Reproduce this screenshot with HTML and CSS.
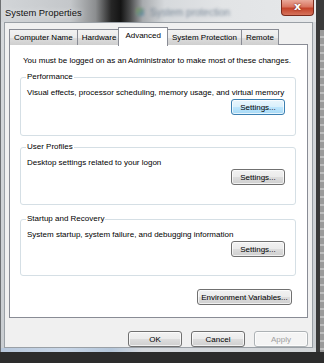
FILE: index.html
```html
<!DOCTYPE html>
<html>
<head>
<meta charset="utf-8">
<link rel="stylesheet" href="styles.css">
</head>
<body>
<div class="screen">
  <div class="main">
    <div class="window">
      <div class="titlebar">
        <span class="title">System Properties</span>
        <span class="ghost"><span class="ghost-icon"></span><span class="ghost-text">System protection</span></span>
        <span class="close">x</span>
      </div>
      <div class="client">
        <div class="tabs">
          <span class="tab">Computer Name</span>
          <span class="tab">Hardware</span>
          <span class="tab active">Advanced</span>
          <span class="tab">System Protection</span>
          <span class="tab">Remote</span>
        </div>
        <div class="panel">
          <p class="intro">You must be logged on as an Administrator to make most of these changes.</p>
          <fieldset class="group perf">
            <legend>Performance</legend>
            <p class="desc">Visual effects, processor scheduling, memory usage, and virtual memory</p>
            <div class="row"><button class="btn focus">Settings...</button></div>
          </fieldset>
          <fieldset class="group users">
            <legend>User Profiles</legend>
            <p class="desc">Desktop settings related to your logon</p>
            <div class="row"><button class="btn">Settings...</button></div>
          </fieldset>
          <fieldset class="group startup">
            <legend>Startup and Recovery</legend>
            <p class="desc">System startup, system failure, and debugging information</p>
            <div class="row"><button class="btn">Settings...</button></div>
          </fieldset>
          <div class="env-row"><button class="btn env">Environment Variables...</button></div>
        </div>
        <div class="actions">
          <button class="btn act">OK</button>
          <button class="btn act">Cancel</button>
          <button class="btn act disabled">Apply</button>
        </div>
      </div>
      <div class="bottom-frame"></div>
    </div>
    <div class="side"><div class="stripe"></div></div>
  </div>
</div>
</body>
</html>
```

FILE: styles.css
```css
* { box-sizing: border-box; }
html, body { margin: 0; padding: 0; }
body {
  font-family: "Liberation Sans", Arial, sans-serif;
  font-size: 8px;
  color: #000;
  background: #2a2a2a;
}
.screen {
  width: 324px;
  height: 363px;
  overflow: hidden;
  background: #2c2c2c;
}
.main {
  display: flex;
  height: 352px;
}
.window {
  width: 316px;
  display: flex;
  flex-direction: column;
  background: linear-gradient(to bottom, #d7dadd, #c9cdd1);
  border-left: 1px solid #6d7073;
}
.titlebar {
  height: 22px;
  display: flex;
  align-items: center;
  padding-left: 4px;
  background: linear-gradient(to right, #d2d5d8 0%, #c4c7ca 22%, #8c8e90 30%, #262626 35%, #141414 38%, #4a4b4c 41%, #a8abae 45%, #d6d9dc 52%, #e2e4e6 70%, #e6e8ea 100%);
}
.title {
  font-size: 9.4px;
  color: #111;
  width: 131px;
  padding-top: 3px;
  text-shadow: 0 0 6px rgba(255,255,255,0.8);
}
.ghost {
  display: flex;
  align-items: center;
  gap: 6px;
  padding-top: 2px;
  filter: blur(1.4px);
  opacity: 0.75;
}
.ghost-icon {
  width: 8px;
  height: 8px;
  border-radius: 2px;
  background: linear-gradient(135deg, #7da04a, #4d7fb5);
}
.ghost-text {
  font-size: 10px;
  color: #5a6d80;
}
.close {
  margin-left: auto;
  align-self: flex-start;
  width: 33px;
  height: 16px;
  margin-right: 2px;
  border: 1px solid #7a2a1c;
  border-top: none;
  border-radius: 0 0 4px 4px;
  background: linear-gradient(to bottom, #e9a99a 0%, #d97560 45%, #c4432a 55%, #d5735c 100%);
  color: #fff;
  font-family: "DejaVu Sans", sans-serif;
  font-weight: bold;
  font-size: 11px;
  line-height: 14px;
  text-align: center;
  text-shadow: 0 0 2px #5a1a10;
}
.client {
  flex: 1;
  margin: 0 3px 0 3px;
  background: #f0f0f0;
  border: 1px solid #9aa0a6;
  padding: 4px 4px 0 4px;
  display: flex;
  flex-direction: column;
}
.tabs {
  display: flex;
  align-items: flex-end;
  height: 18px;
  position: relative;
  z-index: 1;
}
.tab {
  height: 16px;
  padding: 0 4px;
  line-height: 15px;
  border: 1px solid #898c95;
  border-bottom: none;
  margin-right: -1px;
  background: linear-gradient(to bottom, #f2f2f2 0%, #ebebeb 50%, #dddddd 51%, #cfcfcf 100%);
  white-space: nowrap;
}
.tab.active {
  height: 19px;
  margin: 0 -1px 0 -2px;
  padding: 0 6px;
  line-height: 16px;
  background: #fff;
  position: relative;
  top: 1px;
}
.panel {
  height: 274px;
  margin-top: -1px;
  background: #fff;
  border: 1px solid #898c95;
  padding: 9px 11px 0 10px;
  display: flex;
  flex-direction: column;
}
.intro {
  margin: 0 0 3px 3px;
  line-height: 14px;
  white-space: nowrap;
}
.group {
  display: flex;
  flex-direction: column;
  margin: 0;
  padding: 3px 10px 7px 6px;
  border: 1px solid #d5dfe5;
  border-radius: 3px;
  min-width: 0;
}
.group.perf { height: 65px; }
.group.users { height: 64px; margin-top: 5px; }
.group.startup { height: 63px; margin-top: 8px; }
.group legend {
  padding: 0 1px;
  margin-left: -1px;
  line-height: 12px;
}
.desc {
  margin: 0;
  line-height: 13px;
  white-space: nowrap;
}
.row {
  display: flex;
  justify-content: flex-end;
  margin-top: auto;
}
.btn {
  font-family: inherit;
  font-size: 8px;
  color: #000;
  height: 16px;
  padding: 0;
  border: 1px solid #707070;
  border-radius: 3px;
  background: linear-gradient(to bottom, #f2f2f2 0%, #ebebeb 50%, #dddddd 51%, #cfcfcf 100%);
  box-shadow: inset 0 0 0 1px rgba(255,255,255,0.7);
}
.group .btn { width: 54px; }
.btn.focus {
  border-color: #3c7fb1;
  background: linear-gradient(to bottom, #eaf6fd 0%, #d9f0fc 50%, #bee6fd 51%, #a7d9f5 100%);
}
.env-row {
  display: flex;
  justify-content: flex-end;
  margin-top: 13px;
  padding-right: 4px;
}
.btn.env { width: 95px; }
.actions {
  display: flex;
  justify-content: flex-end;
  gap: 9px;
  margin-top: 13px;
}
.btn.act { width: 54px; }
.btn.disabled {
  color: #a0a0a0;
  border-color: #adb2b5;
  background: #f4f4f4;
}
.bottom-frame {
  height: 4px;
  background: linear-gradient(to right, #b8c8dc 0%, #c9d7e8 20%, #b4c6da 35%, #d6dadf 45%, #d3d6d9 100%);
}
.side {
  flex: 1;
  background: #3a3a3a;
  display: flex;
  justify-content: flex-end;
  padding-top: 30px;
}
.stripe {
  width: 4px;
  background: repeating-linear-gradient(to bottom, #9a9a9a 0, #9a9a9a 6px, #bdbdbd 6px, #bdbdbd 8px);
}
```
